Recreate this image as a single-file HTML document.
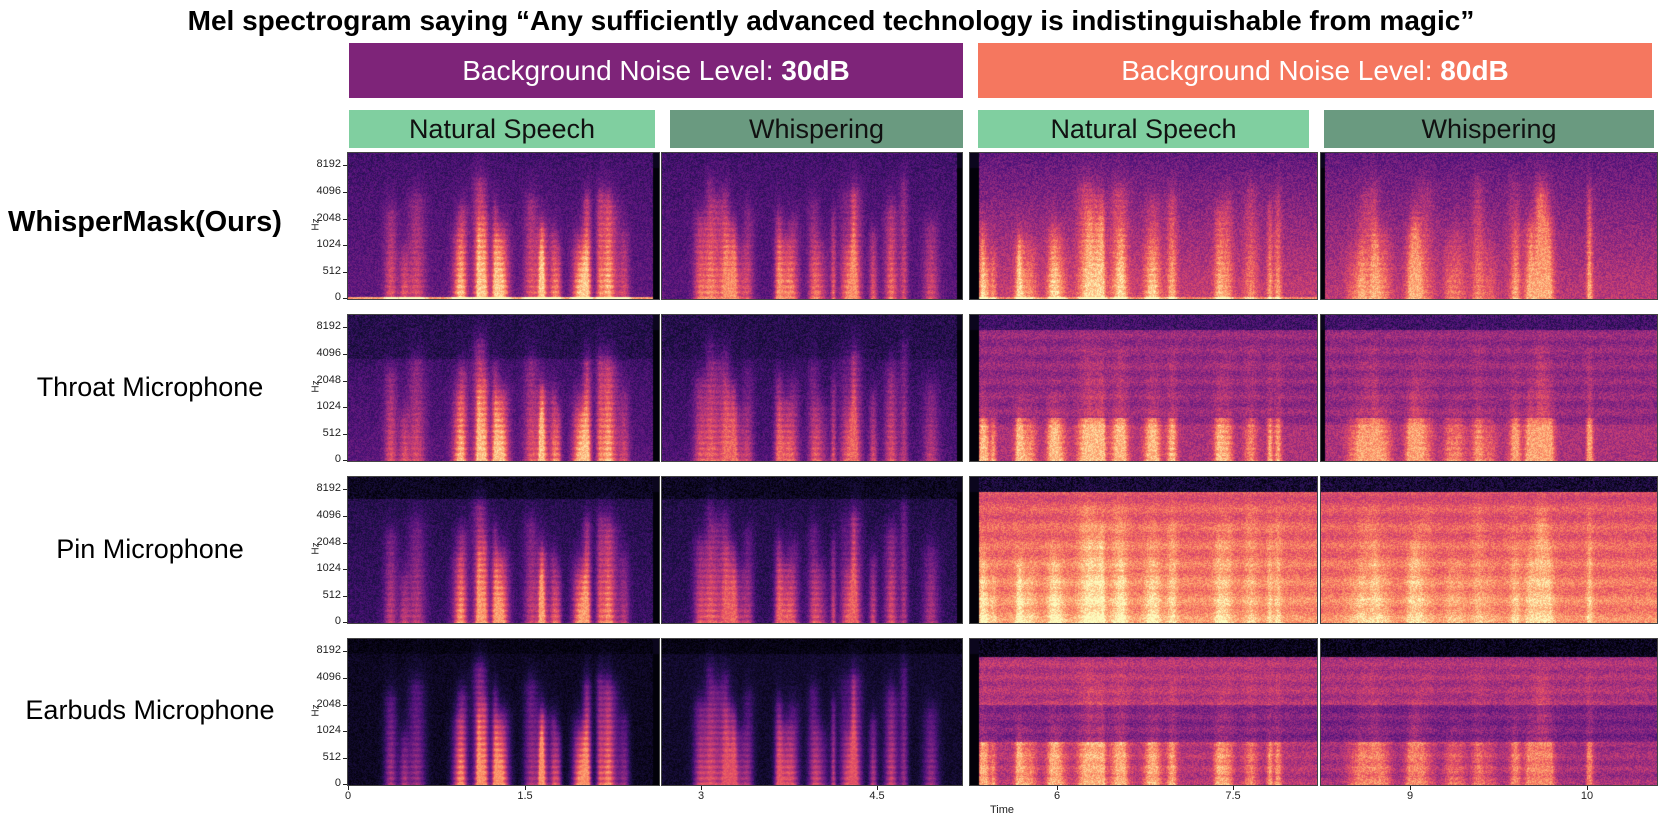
<!DOCTYPE html>
<html><head><meta charset="utf-8">
<style>
body{margin:0;width:1662px;height:825px;background:#fff;position:relative;overflow:hidden;font-family:"Liberation Sans","Noto Sans CJK JP",sans-serif;}
.a{position:absolute;}
.title{left:0;width:1662px;top:5px;text-align:center;font-weight:bold;font-size:28px;color:#000;white-space:nowrap;}
.hdr{top:43px;height:55px;color:#fff;font-size:28px;line-height:55px;text-align:center;}
.sub{top:110px;height:38px;color:#111;font-size:27px;line-height:38px;text-align:center;}
.lab{font-size:27px;color:#000;white-space:nowrap;text-align:center;width:300px;left:0;}
canvas{position:absolute;}
.tk{font-size:11px;color:#222;text-align:right;width:34px;}
.tm{width:4px;height:1px;background:#222;}
.hz{font-size:10px;color:#222;transform:rotate(-90deg);}
.xt{font-size:11px;color:#222;width:40px;text-align:center;}
</style></head><body>
<div class="a title">Mel spectrogram saying “Any sufficiently advanced technology is indistinguishable from magic”</div>
<div class="a hdr" style="left:349px;width:614px;background:#7e2479">Background Noise Level: <b>30dB</b></div>
<div class="a hdr" style="left:978px;width:674px;background:#f5775f">Background Noise Level: <b>80dB</b></div>
<div class="a sub" style="left:349px;width:306px;background:#80cfa0">Natural Speech</div>
<div class="a sub" style="left:670px;width:293px;background:#6a9a80">Whispering</div>
<div class="a sub" style="left:978px;width:331px;background:#80cfa0">Natural Speech</div>
<div class="a sub" style="left:1324px;width:330px;background:#6a9a80">Whispering</div>
<div class="a lab" style="top:206px;left:-5px;font-weight:bold;font-size:29px">WhisperMask(Ours)</div>
<div class="a lab" style="top:372px">Throat Microphone</div>
<div class="a lab" style="top:534px">Pin Microphone</div>
<div class="a lab" style="top:695px">Earbuds Microphone</div>
<div id="root"></div>
<div class="a" style="left:990px;top:804px;font-size:11px;color:#222">Time</div>
<script>
var cols=[[348,659],[662,962],[970,1317],[1321,1657]];
var rows=[153,315,477,639];var H=146;
function magma(v){var s=[[0,0,0,4],[.13,28,16,68],[.25,79,18,123],[.38,129,37,129],[.5,181,54,122],[.63,229,80,100],[.75,251,135,97],[.88,254,194,135],[1,252,253,191]];
v=Math.max(0,Math.min(1,v));for(var i=1;i<s.length;i++){if(v<=s[i][0]){var a=s[i-1],b=s[i],t=(v-a[0])/(b[0]-a[0]);return[a[1]+(b[1]-a[1])*t,a[2]+(b[2]-a[2])*t,a[3]+(b[3]-a[3])*t];}}return[252,253,191];}
function rng(s){return function(){s=(s*1103515245+12345)%2147483648;return s/2147483648;}}
var P=[
 [{b:function(f){return .30-.08*f+(f<.02?.5:0)},s:.55,n:.08},{b:function(f){return .28-.06*f},s:.45,n:.08},{b:function(f){return .55-.25*f+(f<.02?.2:0)},s:.35,n:.1},{b:function(f){return .52-.22*f},s:.3,n:.1}],
 [{b:function(f){return f>.7?.15:.28-.1*f},s:.55,n:.08},{b:function(f){return f>.7?.15:.25-.1*f},s:.4,n:.08},{b:function(f){return f>.9?.22:(f<.25?.48:.42+.03*Math.sin(f*60))},s:.35,n:.1,lo:1},{b:function(f){return f>.9?.22:(f<.25?.48:.42+.03*Math.sin(f*60))},s:.3,n:.1,lo:1}],
 [{b:function(f){return f>.85?.06:.2-.06*f},s:.55,n:.07},{b:function(f){return f>.85?.06:.18-.05*f},s:.45,n:.07},{b:function(f){return f>.9?.1:.78-.18*f+.04*Math.sin(f*50)},s:.2,n:.1},{b:function(f){return f>.9?.1:.76-.18*f+.04*Math.sin(f*50)},s:.15,n:.1}],
 [{b:function(f){return f>.9?.03:.06},s:.65,n:.05},{b:function(f){return f>.9?.03:.08},s:.5,n:.05},{b:function(f){return f>.88?.04:(f>.55?.5:(f>.3?.38:.5))+.03*Math.sin(f*70)},s:.3,n:.1,lo:1},{b:function(f){return f>.88?.04:(f>.55?.48:(f>.3?.36:.46))+.03*Math.sin(f*70)},s:.25,n:.1,lo:1}]
];
var root=document.getElementById('root');
function add(h){root.insertAdjacentHTML('beforeend',h);}
for(var r=0;r<4;r++)for(var c=0;c<4;c++){
 var x0=cols[c][0],w=cols[c][1]-x0,y0=rows[r];
 var cv=document.createElement('canvas');cv.width=w;cv.height=H;cv.style.left=x0+'px';cv.style.top=y0+'px';cv.style.outline='1px solid #444';
 root.appendChild(cv);var ctx=cv.getContext('2d'),im=ctx.createImageData(w,H),d=im.data;
 var R=rng(1000+c*17),bursts=[];for(var i=0;i<24;i++)bursts.push([R()*w*0.9+w*0.03,2+R()*7,.3+R()*.5,.5+R()*.6]);
 var N=rng(5+r*31+c*7),p=P[r][c];
 for(var x=0;x<w;x++){
  for(var y=0;y<H;y++){
   var f=1-y/H,v=p.b(f)+(N()-.5)*p.n*2;
   var sp=0;for(var k=0;k<bursts.length;k++){var b=bursts[k],dx=(x-b[0])/b[1];if(dx>-3&&dx<3){var e=Math.exp(-dx*dx),reach=b[2];var g=f<reach?1-.5*f/reach:Math.exp(-(f-reach)*12)*.5;sp+=e*g*b[3];}}
   if(p.lo)sp*= f<.3?1.3:.35;
   sp*=(.88+.12*Math.sin(f*H*1.1));
   v+=Math.min(sp,1.1)*p.s;
   var black=(c==0&&x>w-7)||(c==1&&x>w-6&&r<3)||(c==2&&x<9)||(c==3&&x<4&&r<2);
   if(black)v=f>.9?.05:0.01;
   var m=magma(v),o=(y*w+x)*4;d[o]=m[0];d[o+1]=m[1];d[o+2]=m[2];d[o+3]=255;
  }}
 ctx.putImageData(im,0,0);
 if(c==0){var t=['8192','4096','2048','1024','512','0'],off=[12,39,66,92,119,145];
  for(var j=0;j<6;j++){add('<div class="a tk" style="left:307px;top:'+(y0+off[j]-7)+'px">'+t[j]+'</div><div class="a tm" style="left:343px;top:'+(y0+off[j])+'px"></div>');}
  add('<div class="a hz" style="left:310px;top:'+(y0+66)+'px">Hz</div>');}
}
var xs=[[348,'0'],[525,'1.5'],[701,'3'],[877,'4.5'],[1057,'6'],[1233,'7.5'],[1410,'9'],[1587,'10']];
xs.forEach(function(a){add('<div class="a tm" style="left:'+a[0]+'px;top:786px;width:1px;height:4px"></div><div class="a xt" style="left:'+(a[0]-20)+'px;top:790px">'+a[1]+'</div>');});
</script>
</body></html>
